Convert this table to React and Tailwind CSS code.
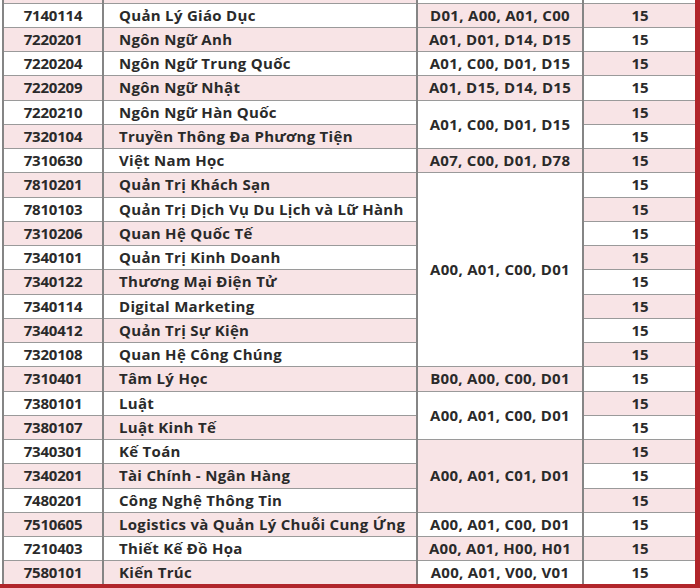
import React from "react";

const rows = [
  ["7140114", "Quản Lý Giáo Dục"],
  ["7220201", "Ngôn Ngữ Anh"],
  ["7220204", "Ngôn Ngữ Trung Quốc"],
  ["7220209", "Ngôn Ngữ Nhật"],
  ["7220210", "Ngôn Ngữ Hàn Quốc"],
  ["7320104", "Truyền Thông Đa Phương Tiện"],
  ["7310630", "Việt Nam Học"],
  ["7810201", "Quản Trị Khách Sạn"],
  ["7810103", "Quản Trị Dịch Vụ Du Lịch và Lữ Hành"],
  ["7310206", "Quan Hệ Quốc Tế"],
  ["7340101", "Quản Trị Kinh Doanh"],
  ["7340122", "Thương Mại Điện Tử"],
  ["7340114", "Digital Marketing"],
  ["7340412", "Quản Trị Sự Kiện"],
  ["7320108", "Quan Hệ Công Chúng"],
  ["7310401", "Tâm Lý Học"],
  ["7380101", "Luật"],
  ["7380107", "Luật Kinh Tế"],
  ["7340301", "Kế Toán"],
  ["7340201", "Tài Chính - Ngân Hàng"],
  ["7480201", "Công Nghệ Thông Tin"],
  ["7510605", "Logistics và Quản Lý Chuỗi Cung Ứng"],
  ["7210403", "Thiết Kế Đồ Họa"],
  ["7580101", "Kiến Trúc"],
];

// tổ hợp môn: dòng bắt đầu -> [số dòng gộp, nội dung, nền hồng]
const groups = {
  0: [1, "D01, A00, A01, C00", true],
  1: [1, "A01, D01, D14, D15", true],
  2: [1, "A01, C00, D01, D15", false],
  3: [1, "A01, D15, D14, D15", true],
  4: [2, "A01, C00, D01, D15", false],
  6: [1, "A07, C00, D01, D78", true],
  7: [8, "A00, A01, C00, D01", false],
  15: [1, "B00, A00, C00, D01", true],
  16: [2, "A00, A01, C00, D01", false],
  18: [3, "A00, A01, C01, D01", true],
  21: [1, "A00, A01, C00, D01", false],
  22: [1, "A00, A01, H00, H01", true],
  23: [1, "A00, A01, V00, V01", false],
};

const cell = "border-y border-y-[#9a9a9a] border-x-2 border-x-[#858585] p-0";

const App = () => {
  return (
    <div
      className="w-[700px] h-[588px] overflow-hidden bg-white border-r-[5px] border-b-[4px] border-[#b1262b] text-[#2a2a2a]"
      style={{ fontFamily: '"Open Sans", "Liberation Sans", sans-serif' }}
    >
      <table className="ml-[2px] mt-[-1px] border-collapse table-fixed w-[694px] text-[15px] font-bold leading-none">
        <colgroup>
          <col className="w-[100px]" />
          <col className="w-[314px]" />
          <col className="w-[166px]" />
          <col className="w-[114px]" />
        </colgroup>
        <tbody>
          <tr className="h-[4px]">
            <td className={`${cell} bg-[#f8e4e6] border-t-0`}></td>
            <td className={`${cell} bg-[#f8e4e6] border-t-0`}></td>
            <td className={`${cell} bg-white border-t-0`}></td>
            <td className={`${cell} bg-white border-t-0`}></td>
          </tr>
          {rows.map(([code, name], i) => {
            const pinkLeft = i % 2 === 1;
            const g = groups[i];
            return (
              <tr key={code + i} className="h-[24.25px]">
                <td className={`${cell} text-center tracking-[-0.2px] ${pinkLeft ? "bg-[#f8e4e6]" : "bg-white"}`}>
                  {code}
                </td>
                <td className={`${cell} pl-[15px] whitespace-nowrap tracking-[0.3px] ${pinkLeft ? "bg-[#f8e4e6]" : "bg-white"}`}>
                  {name}
                </td>
                {g && (
                  <td
                    rowSpan={g[0]}
                    className={`${cell} text-center whitespace-nowrap tracking-[0.3px] ${g[2] ? "bg-[#f8e4e6]" : "bg-white"}`}
                  >
                    {g[1]}
                  </td>
                )}
                <td className={`${cell} text-center ${pinkLeft ? "bg-white" : "bg-[#f8e4e6]"}`}>
                  15
                </td>
              </tr>
            );
          })}
        </tbody>
      </table>
    </div>
  );
};

export default App;
